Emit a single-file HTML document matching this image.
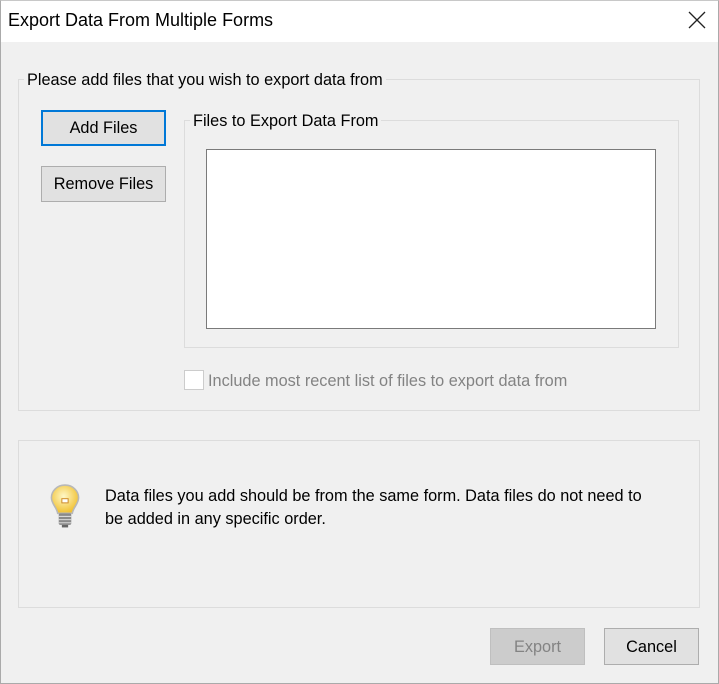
<!DOCTYPE html>
<html><head><meta charset="utf-8"><style>
*{box-sizing:border-box;margin:0;padding:0}
body{width:719px;height:684px;background:#f0f0f0;font-family:"Liberation Sans",sans-serif;font-size:16.3px;color:#000;position:relative;overflow:hidden;letter-spacing:0}
.a{position:absolute}
.win{left:0;top:0;width:719px;height:684px;border:1px solid #aaa;border-top-color:#c8c8c8}
.title{left:1px;top:1px;width:717px;height:41px;background:#fff}
.gb{border:1px solid #dcdcdc}
.lbl{background:#f0f0f0;padding:0 3px;white-space:nowrap;line-height:20px}
.btn{background:#e1e1e1;border:1px solid #adadad;text-align:center;line-height:34px}
</style></head><body>
<div class="a win"></div>
<div class="a title"></div>
<div class="a" style="left:8px;top:10px;font-size:18px">Export Data From Multiple Forms</div>
<svg class="a" style="left:688px;top:11px" width="18" height="18"><path d="M1 1L17 17M17 1L1 17" stroke="#222" stroke-width="1.3"/></svg>

<div class="a gb" style="left:18px;top:79px;width:682px;height:332px"></div>
<div class="a lbl" style="left:24px;top:70px">Please add files that you wish to export data from</div>

<div class="a btn" style="left:41px;top:110px;width:125px;height:36px;border:2px solid #0078d7;line-height:33px">Add Files</div>
<div class="a btn" style="left:41px;top:166px;width:125px;height:36px">Remove Files</div>

<div class="a gb" style="left:184px;top:120px;width:495px;height:228px"></div>
<div class="a lbl" style="left:190px;top:111px">Files to Export Data From</div>
<div class="a" style="left:206px;top:149px;width:450px;height:180px;background:#fff;border:1px solid #7a7a7a"></div>

<div class="a" style="left:184px;top:370px;width:20px;height:20px;background:#fff;border:1px solid #ccc"></div>
<div class="a" style="left:208px;top:371px;color:#838383;line-height:20px">Include most recent list of files to export data from</div>

<div class="a gb" style="left:18px;top:440px;width:682px;height:168px"></div>
<svg class="a" style="left:48px;top:483px" width="34" height="46" viewBox="0 0 32 44">
<defs><radialGradient id="g" cx="0.45" cy="0.4" r="0.6"><stop offset="0" stop-color="#fff8c8"/><stop offset="1" stop-color="#f0c030"/></radialGradient></defs>
<path d="M16 2C8 2 3 8 3 14c0 6 5 9 6 15h14c1-6 6-9 6-15C29 8 24 2 16 2z" fill="url(#g)" stroke="#b8b8b8" stroke-width="1.5"/>
<rect x="13" y="15" width="6" height="4" fill="#fff" stroke="#d09030" stroke-width="1"/>
<rect x="10" y="29" width="12" height="11" rx="1.5" fill="#8a8a8a"/>
<path d="M10 32h12M10 35h12M10 38h12" stroke="#d8d8d8" stroke-width="1"/>
<rect x="13" y="40" width="6" height="2.5" fill="#666"/>
</svg>
<div class="a" style="left:105px;top:485px;line-height:23px;width:600px">Data files you add should be from the same form. Data files do not need to<br>be added in any specific order.</div>

<div class="a btn" style="left:490px;top:628px;width:95px;height:37px;background:#cccccc;border-color:#bfbfbf;color:#838383;line-height:36px">Export</div>
<div class="a btn" style="left:604px;top:628px;width:95px;height:37px;line-height:36px">Cancel</div>
</body></html>
